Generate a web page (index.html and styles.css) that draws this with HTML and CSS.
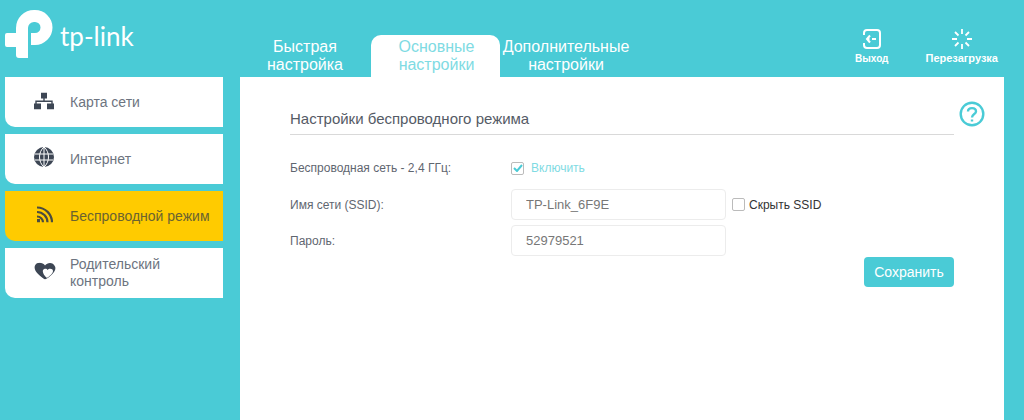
FILE: index.html
```html
<!DOCTYPE html>
<html lang="ru">
<head>
    <meta charset="UTF-8">
    <title>TP-Link</title>
    <link rel="stylesheet" href="styles.css">
</head>
<body>
    <header class="top-bar">
        <div class="logo">
            <svg class="logo-mark" width="50" height="50" viewBox="0 0 50 50">
                <path d="M11 24V19A18 18 0 0 1 29 1H30A17.500 17.500 0 0 1 30 36H26V24H30A5.500 5.500 0 0 0 30 13H29A6 6 0 0 0 23 19V49H14A3 3 0 0 1 11 46V38H2A2 2 0 0 1 0 36V26A2 2 0 0 1 2 24Z" fill="#fff"/>
            </svg>
            <span class="logo-text">tp-link</span>
        </div>
        <nav class="tabs">
            <a class="tab">Быстрая настройка</a>
            <a class="tab active">Основные настройки</a>
            <a class="tab">Дополнительные настройки</a>
        </nav>
        <div class="top-actions">
            <a class="top-action logout">
                <svg width="20" height="20" viewBox="0 0 20 20" fill="none" stroke="#fff" stroke-width="2">
                    <path d="M2 6V4A3 3 0 0 1 5 1H15A3 3 0 0 1 18 4V16A3 3 0 0 1 15 19H5A3 3 0 0 1 2 16V14"/>
                    <path d="M8 6.500L5 10L8 13.500M5.500 10H7.500M10 10H14"/>
                </svg>
                <span>Выход</span>
            </a>
            <a class="top-action reboot">
                <svg width="20" height="20" viewBox="0 0 20 20" fill="none" stroke="#fff" stroke-width="1.800">
                    <path d="M10 0V5M10 15V20M0 10H5M15 10H20M3 3L6.500 6.500M13.500 13.500L17 17M3 17L6.500 13.500M13.500 6.500L17 3"/>
                </svg>
                <span>Перезагрузка</span>
            </a>
        </div>
    </header>

    <div class="main">
        <aside class="sidebar">
            <a class="menu-item">
                <svg class="menu-icon" width="20" height="17" viewBox="0 0 20 17" fill="#3d4654">
                    <path d="M7 0H13V6H10.700V8H18.700V11H20V17H13V11H17.300V9.500H2.700V11H7V17H0V11H1.300V8H9.300V6H7Z"/>
                </svg>
                <span>Карта сети</span>
            </a>
            <a class="menu-item">
                <svg class="menu-icon" width="20" height="20" viewBox="0 0 20 20">
                    <circle cx="10" cy="10" r="10" fill="#3d4654"/>
                    <path d="M1 7H19M1 13H19M10 0V20M10 0C4 5 4 15 10 20M10 0C16 5 16 15 10 20" fill="none" stroke="#fff" stroke-width="1"/>
                </svg>
                <span>Интернет</span>
            </a>
            <a class="menu-item active">
                <svg class="menu-icon" width="16" height="17" viewBox="0 0 16 17" fill="none" stroke="#4b4c3f" stroke-width="2.200">
                    <path d="M0 2A15 15 0 0 1 15 17M0 6.500A10.500 10.500 0 0 1 10.500 17M0 11A6 6 0 0 1 6 17"/>
                    <rect x="0" y="13.500" width="3" height="3.500" fill="#4b4c3f" stroke="none"/>
                </svg>
                <span>Беспроводной режим</span>
            </a>
            <a class="menu-item">
                <svg class="menu-icon" width="22" height="17" viewBox="0 0 22 17">
                    <path d="M11 3C9 0 3 -1 1 3C-1 8 5 13 11 17C17 14 23 8 21 4C19 -1 13 0 11 3Z" fill="#3d4654"/>
                    <path d="M9 7.500C10.500 5.500 13 6 13.500 7.500C15 5.500 19 6 19 8.500C19 11 15 14 13 15.500C11 14 8 10 9 7.500Z" fill="#fff"/>
                </svg>
                <span>Родительский контроль</span>
            </a>
        </aside>

        <section class="content">
            <svg class="help" width="26" height="26" viewBox="0 0 26 26" fill="none" stroke="#4acbd6" stroke-width="2.400">
                <circle cx="13" cy="13" r="11.300"/>
                <path d="M9 10.500C9 6 17 6 17 10.500C17 13 13 13 13 16.500"/>
                <path d="M13 18.500V20.500"/>
            </svg>
            <h2 class="section-title">Настройки беспроводного режима</h2>

            <div class="form-row switch-row">
                <label class="form-label">Беспроводная сеть - 2,4 ГГц:</label>
                <span class="checkbox checked">
                    <svg width="10" height="8" viewBox="0 0 10 8" fill="none" stroke="#4acbd6" stroke-width="2"><path d="M1 4L4 7L9 1"/></svg>
                </span>
                <span class="enable-text">Включить</span>
            </div>
            <div class="form-row">
                <label class="form-label">Имя сети (SSID):</label>
                <input class="text-input" type="text" value="TP-Link_6F9E">
                <span class="checkbox hide-box"></span>
                <span class="hide-text">Скрыть SSID</span>
            </div>
            <div class="form-row">
                <label class="form-label">Пароль:</label>
                <input class="text-input" type="text" value="52979521">
            </div>
            <div class="form-actions">
                <button class="btn">Сохранить</button>
            </div>
        </section>
    </div>
</body>
</html>
```

FILE: styles.css
```css
:root {
    --primary-color: #4acbd6;
    --text-color: #5f6670;
    --menu-text: #6d7480;
    --border-color: #ececec;
}

* {
    box-sizing: border-box;
    margin: 0;
    padding: 0;
}

html,
body {
    height: 100%;
    overflow: hidden;
}

body {
    font-family: 'Liberation Sans', Arial, sans-serif;
    background-color: var(--primary-color);
    color: var(--text-color);
    display: flex;
    flex-direction: column;
}

.top-bar {
    height: 77px;
    display: flex;
    flex-shrink: 0;
}

.logo {
    width: 239px;
    padding: 9px 0 0 5px;
    display: flex;
    align-items: flex-start;
}

.logo-text {
    font-family: 'Lato', sans-serif;
    font-size: 26px;
    line-height: 32px;
    color: #fff;
    margin: 11px 0 0 5px;
}

.tabs {
    display: flex;
    align-items: flex-end;
}

.tab {
    width: 132px;
    height: 42px;
    padding-top: 3px;
    font-size: 16px;
    line-height: 18px;
    color: #fff;
    text-align: center;
}

.tab.active {
    width: 129px;
    padding-left: 2px;
    background-color: #fff;
    color: #7fdbe3;
    border-radius: 10px 10px 0 0;
}

.top-actions {
    display: flex;
    margin-left: auto;
    padding: 29px 26px 0 0;
}

.top-action {
    display: flex;
    flex-direction: column;
    align-items: center;
    gap: 3px;
    font-size: 11px;
    font-weight: bold;
    line-height: 13px;
    color: #fff;
}

.top-action.logout {
    font-size: 10px;
    margin-right: 37px;
}

.main {
    flex: 1;
    display: flex;
    min-height: 0;
}

.sidebar {
    width: 240px;
    padding-left: 5px;
    display: flex;
    flex-direction: column;
    gap: 7px;
    flex-shrink: 0;
}

.menu-item {
    width: 218px;
    height: 50px;
    display: flex;
    align-items: center;
    background-color: #fff;
    border-radius: 0 0 0 10px;
    font-size: 14px;
    line-height: 17px;
    color: var(--menu-text);
    position: relative;
    padding: 0 10px 0 65px;
}

.menu-item.active {
    background-color: #ffcb00;
    color: #6b6330;
}

.menu-icon {
    position: absolute;
    left: 29px;
    top: calc(50% - 2px);
    transform: translateY(-50%);
}

.menu-item:first-child .menu-icon {
    top: calc(50% - 1px);
}

.menu-item.active .menu-icon {
    left: 32px;
}

.content {
    width: 764px;
    background-color: #fff;
    padding: 31px 50px 0;
    position: relative;
}

.help {
    position: absolute;
    left: 719px;
    top: 24px;
}

.section-title {
    font-size: 15px;
    font-weight: normal;
    line-height: 22px;
    height: 27px;
    border-bottom: 1px solid #d9d9d9;
    color: #555b66;
    margin-bottom: 19px;
}

.form-row {
    display: flex;
    align-items: center;
    margin-bottom: 5px;
    font-size: 12px;
}

.switch-row {
    height: 28px;
    margin-bottom: 7px;
}

.form-label {
    width: 221px;
    flex-shrink: 0;
}

.checkbox {
    width: 13px;
    height: 13px;
    border: 1px solid #bbb;
    border-radius: 2px;
    display: flex;
    align-items: center;
    justify-content: center;
}

.enable-text {
    margin-left: 7px;
    color: #7fdbe3;
}

.text-input {
    width: 215px;
    height: 31px;
    border: 1px solid var(--border-color);
    border-radius: 4px;
    padding-left: 14px;
    font-family: inherit;
    font-size: 13px;
    color: #777;
}

.hide-box {
    margin-left: 6px;
}

.hide-text {
    margin-left: 4px;
    font-size: 12px;
    color: #333;
}

.form-actions {
    display: flex;
    justify-content: flex-end;
    margin-top: -4px;
}

.btn {
    width: 90px;
    height: 30px;
    background-color: var(--primary-color);
    color: #fff;
    border: none;
    border-radius: 4px;
    font-family: inherit;
    font-size: 14px;
}
```
